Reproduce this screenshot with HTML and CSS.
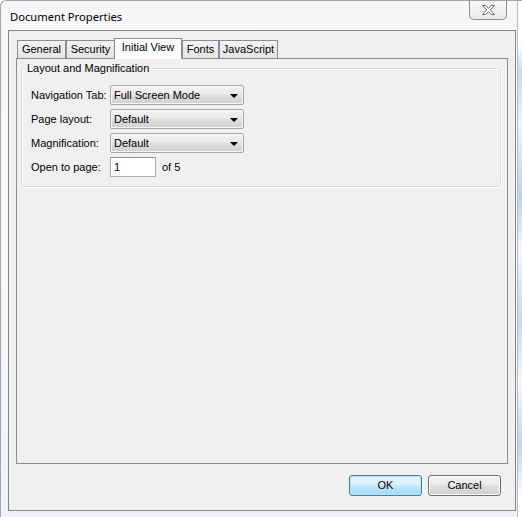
FILE: index.html
```html
<!DOCTYPE html>
<html>

	<head>
		<meta charset="UTF-8">
		<title>Document Properties</title>
		<link rel="stylesheet" href="styles.css">
	</head>

	<body>
		<div class="frame">
			<div class="titleBar">
				<span class="caption">Document Properties</span>
				<div class="closeBtn">
					<svg width="13" height="10" viewBox="0 0 13 10">
						<polygon points="0.5,0.5 3.5,0.5 6.5,3.2 9.5,0.5 12.5,0.5 8.3,5 12.5,9.5 9.5,9.5 6.5,6.8 3.5,9.5 0.5,9.5 4.7,5" fill="#fff" stroke="#6b6b6b" stroke-width="1" />
					</svg>
				</div>
			</div>

			<div class="client">
				<div class="tabs">
					<div class="tab tabGeneral">General</div>
					<div class="tab tabSecurity">Security</div>
					<div class="tab tabView active">Initial View</div>
					<div class="tab tabFonts">Fonts</div>
					<div class="tab tabScript">JavaScript</div>
				</div>

				<div class="panel">
					<div class="groupBox">
						<span class="legend">Layout and Magnification</span>

						<div class="row">
							<span class="label">Navigation Tab:</span>
							<div class="combo">Full Screen Mode<i class="arrow"></i></div>
						</div>
						<div class="row">
							<span class="label">Page layout:</span>
							<div class="combo">Default<i class="arrow"></i></div>
						</div>
						<div class="row">
							<span class="label">Magnification:</span>
							<div class="combo">Default<i class="arrow"></i></div>
						</div>
						<div class="row">
							<span class="label">Open to page:</span>
							<div class="textBox">1</div>
							<span class="pageCount">of 5</span>
						</div>
					</div>
				</div>

				<div class="buttons">
					<div class="btn default">OK</div>
					<div class="btn">Cancel</div>
				</div>
			</div>
			<div class="desktop"></div>
		</div>
	</body>

</html>
```

FILE: styles.css
```css
body {
	margin: 0;
	padding: 0;
	background: #ffffff;
	font-family: "Liberation Sans", Arial, sans-serif;
	font-size: 11px;
	color: #000;
}

.frame {
	position: relative;
	width: 522px;
	height: 517px;
	box-sizing: border-box;
	border: 1px solid #a4a4a4;
	border-right: none;
	border-bottom: none;
	border-radius: 6px 0 0 0;
	padding: 0 6px 6px 7px;
	background: linear-gradient(to bottom, #f4f6f8, #fafbfc 40%, #eef2f5);
	display: flex;
	flex-direction: column;
	overflow: hidden;
}

/* desktop showing past the right edge of the window */
.desktop {
	position: absolute;
	top: 0;
	right: 0;
	width: 4px;
	height: 100%;
	border-left: 1px solid #b9bcc0;
	background: linear-gradient(to bottom, #ffffff 8%, #c6dcef 14%, #eef5fb 24%, #b7d3ec 38%, #f4f8fb 48%, #c2daf0 62%, #f6f9fc 74%, #bcd6ee 86%, #ffffff 96%);
}

.titleBar {
	height: 29px;
	display: flex;
	align-items: center;
	justify-content: space-between;
}

.caption {
	font-family: "Noto Sans", "Liberation Sans", sans-serif;
	font-size: 11.2px;
	margin-left: 2px;
	margin-top: 1px;
	color: #000;
}

.closeBtn {
	align-self: flex-start;
	width: 36px;
	height: 19px;
	margin-top: -1px;
	margin-right: 9px;
	border: 1px solid #8e8f8f;
	border-top: none;
	border-radius: 0 0 5px 5px;
	background: linear-gradient(to bottom, #f7f7f7, #eaeaea);
	display: flex;
	align-items: center;
	justify-content: center;
}

.client {
	flex: 1;
	border: 1px solid #858585;
	background: #f0f0f0;
	padding: 7px 7px 14px 7px;
	display: flex;
	flex-direction: column;
}

.tabs {
	display: flex;
	align-items: flex-end;
	padding-left: 1px;
	height: 20px;
	position: relative;
	z-index: 2;
}

.tab {
	box-sizing: border-box;
	height: 18px;
	line-height: 17px;
	text-align: center;
	border: 1px solid #898c95;
	border-bottom: none;
	background: linear-gradient(to bottom, #f2f2f2, #e4e4e4);
	color: #000;
}

.tabGeneral {
	width: 49px;
}

.tabSecurity {
	width: 49px;
}

.tabView {
	width: 68px;
}

.tabFonts {
	width: 37px;
}

.tabScript {
	width: 59px;
}

.tab.active {
	height: 21px;
	line-height: 17px;
	margin: 0 0 -1px -1px;
	background: #fbfbfb;
	position: relative;
	z-index: 3;
}

.panel {
	height: 395px;
	border: 1px solid #898c95;
	background: #f0f0f0;
	padding: 9px 6px 0 4px;
}

.groupBox {
	position: relative;
	height: 101px;
	border: 1px solid #d5dfe5;
	border-radius: 3px;
	box-shadow: inset 1px 1px 0 #ffffff, 1px 1px 0 #ffffff;
	padding: 16px 9px 0 9px;
	display: flex;
	flex-direction: column;
	gap: 4px;
}

.legend {
	position: absolute;
	left: 3px;
	top: -8px;
	padding: 0 3px 0 2px;
	background: #f0f0f0;
	line-height: 15px;
}

.row {
	display: flex;
	align-items: center;
	height: 20px;
}

.label {
	width: 79px;
}

.combo {
	position: relative;
	width: 129px;
	height: 18px;
	line-height: 18px;
	padding-left: 3px;
	border: 1px solid #a7a7a7;
	border-radius: 2px;
	box-shadow: inset 0 0 0 1px #f6f6f6;
	background: linear-gradient(to bottom, #f3f3f3, #ebebeb 45%, #dcdcdc 55%, #d2d2d2);
}

.arrow {
	position: absolute;
	right: 5px;
	top: 8px;
	width: 0;
	height: 0;
	border-left: 4px solid transparent;
	border-right: 4px solid transparent;
	border-top: 4px solid #000;
}

.textBox {
	width: 41px;
	height: 18px;
	line-height: 18px;
	padding-left: 3px;
	border: 1px solid #abadb3;
	border-top-color: #8e8f8f;
	background: #ffffff;
}

.pageCount {
	margin-left: 6px;
}

.buttons {
	margin-top: auto;
	display: flex;
	justify-content: flex-end;
	gap: 6px;
	padding-right: 7px;
}

.btn {
	width: 71px;
	height: 19px;
	line-height: 19px;
	text-align: center;
	border: 1px solid #707070;
	border-radius: 3px;
	box-shadow: inset 0 0 0 1px #fbfbfb;
	background: linear-gradient(to bottom, #f2f2f2, #ebebeb 45%, #dddddd 55%, #cfcfcf);
}

.btn.default {
	border-color: #3c7fb1;
	box-shadow: inset 0 0 0 1px #bfe3f7;
	background: linear-gradient(to bottom, #eaf6fd, #d9f0fc 45%, #bee6fd 55%, #a7d9f5);
}
```
